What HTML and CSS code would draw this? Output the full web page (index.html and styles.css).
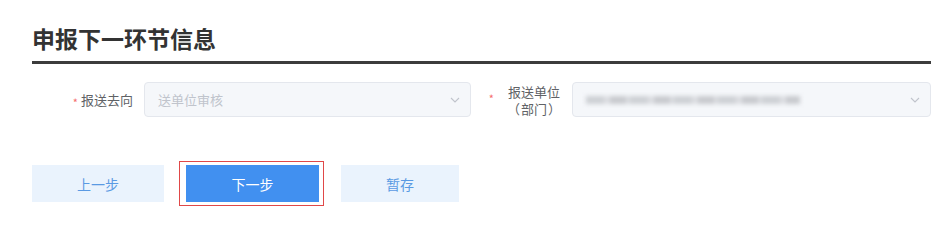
FILE: index.html
```html
<!DOCTYPE html>
<html lang="zh-CN">
<head>
  <meta charset="UTF-8">
  <title>申报下一环节信息</title>
  <link rel="stylesheet" href="styles.css">
</head>
<body>

<div class="panel">
  <h2 class="title">申报下一环节信息</h2>

  <div class="form-row">
    <div class="form-item first">
      <label class="label"><span class="star">*</span>报送去向</label>
      <div class="select">
        <span class="placeholder">送单位审核</span>
        <svg class="arrow" width="10" height="6" viewBox="0 0 10 6"><path d="M1 1 L5 5 L9 1" fill="none" stroke="#c0c4cc" stroke-width="1.1"/></svg>
      </div>
    </div>
    <div class="form-item second">
      <label class="label two-line"><span class="star">*</span><span class="label-text">报送单位<br>（<span class="dept">部门</span>）</span></label>
      <div class="select grow">
        <span class="masked"></span>
        <svg class="arrow" width="10" height="6" viewBox="0 0 10 6"><path d="M1 1 L5 5 L9 1" fill="none" stroke="#c0c4cc" stroke-width="1.1"/></svg>
      </div>
    </div>
  </div>

  <div class="actions">
    <button class="btn light prev">上一步</button>
    <span class="focus-ring"><button class="btn primary">下一步</button></span>
    <button class="btn light save">暂存</button>
  </div>
</div>

</body>
</html>
```

FILE: styles.css
```css
body {
  margin: 0;
  font-family: "Noto Sans CJK SC", "Liberation Sans", sans-serif;
  background: #fff;
}
.panel {
  padding: 0 14px 0 32px;
}
.title {
  margin: 0;
  padding-top: 22px;
  height: 39px;
  font-size: 23px;
  font-weight: bold;
  color: #333;
  line-height: 32px;
  border-bottom: 3px solid #3c3c3c;
}
.form-row {
  display: flex;
  margin-top: 18px;
  height: 35px;
}
.form-item {
  display: flex;
  align-items: center;
}
.form-item.second {
  flex: 1;
}
.label {
  display: flex;
  justify-content: flex-end;
  align-items: center;
  box-sizing: border-box;
  padding-right: 11px;
  font-size: 13px;
  color: #606266;
}
.first .label {
  width: 112px;
}
.second .label {
  width: 101px;
  padding-right: 11px;
}
.star {
  color: #f56c6c;
  font-size: 11px;
  margin-right: 3px;
  align-self: flex-start;
  margin-top: 5px;
}
.first .star {
  margin-top: 4px;
}
.two-line .star {
  margin-right: 13px;
  margin-top: 7px;
}
.label-text {
  text-align: center;
  line-height: 17px;
}
.dept {
  margin: 0 1px;
}
.select {
  display: flex;
  align-items: center;
  justify-content: space-between;
  box-sizing: border-box;
  height: 35px;
  width: 327px;
  padding: 0 10px 0 13px;
  background: #f5f7fa;
  border: 1px solid #e4e7ed;
  border-radius: 4px;
  font-size: 13px;
}
.select.grow {
  flex: 1;
  width: auto;
}
.placeholder {
  color: #c0c4cc;
}
.masked {
  display: block;
  width: 214px;
  height: 8px;
  margin-top: 1px;
  background: repeating-linear-gradient(90deg, #cdd0d4 0 18px, #dcdee2 18px 24px, #c8cace 24px 40px, #dadce0 40px 44px);
  filter: blur(2px);
}
.arrow {
  display: block;
}
.actions {
  display: flex;
  align-items: center;
  margin-top: 44px;
}
.btn {
  font-family: inherit;
  font-size: 14px;
  height: 37px;
  border: none;
  border-radius: 0;
  padding: 0;
  cursor: pointer;
}
.btn.light {
  background: #eaf3fd;
  color: #5a9ae3;
}
.btn.prev {
  width: 132px;
}
.btn.save {
  width: 118px;
  margin-left: 17px;
}
.btn.primary {
  display: block;
  width: 133px;
  background: #4190f0;
  color: #fff;
}
.focus-ring {
  display: block;
  margin-left: 15px;
  padding: 3px 4px 3px 6px;
  border: 1px solid #e04848;
}
```
